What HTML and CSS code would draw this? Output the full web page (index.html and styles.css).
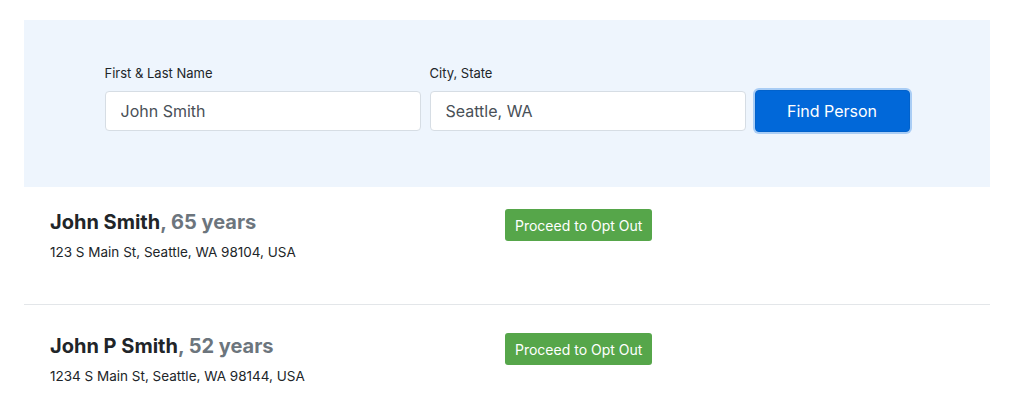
FILE: index.html
```html
<!DOCTYPE html>
<html lang="en">
<head>
  <meta charset="UTF-8">
  <meta name="viewport" content="width=device-width, initial-scale=1">
  <title>Find Person</title>
  <link rel="stylesheet" href="styles.css">
</head>
<body>
  <div class="page">
    <form class="search" onsubmit="return false">
      <div class="field">
        <label for="name">First &amp; Last Name</label>
        <input type="text" id="name" value="John Smith">
      </div>
      <div class="field">
        <label for="city">City, State</label>
        <input type="text" id="city" value="Seattle, WA">
      </div>
      <button class="btn-find" type="submit">Find Person</button>
    </form>

    <div class="results">
      <div class="person">
        <div class="info">
          <h2>John Smith<span class="age">, 65 years</span></h2>
          <p>123 S Main St, Seattle, WA 98104, USA</p>
        </div>
        <div class="action">
          <button class="btn-optout">Proceed to Opt Out</button>
        </div>
      </div>
      <div class="person">
        <div class="info">
          <h2>John P Smith<span class="age">, 52 years</span></h2>
          <p>1234 S Main St, Seattle, WA 98144, USA</p>
        </div>
        <div class="action">
          <button class="btn-optout">Proceed to Opt Out</button>
        </div>
      </div>
    </div>
  </div>
</body>
</html>
```

FILE: styles.css
```css
body {
  font-family: Inter, 'Liberation Sans', sans-serif;
  background-color: #fff;
  color: #212529;
  margin: 0;
  padding: 20px 34px 0 24px;
}
.search {
  display: flex;
  justify-content: center;
  align-items: flex-end;
  gap: 9px;
  background-color: #eef5fd;
  padding: 45px 0 56px;
}
.field {
  display: flex;
  flex-direction: column;
  width: 316px;
}
.field label {
  font-size: 13px;
  color: #212529;
  margin-bottom: 10px;
}
.field input {
  box-sizing: border-box;
  height: 40px;
  padding: 0 15px;
  font-family: inherit;
  font-size: 16px;
  color: #495057;
  background: #fff;
  border: 1px solid #d6dde4;
  border-radius: 4px;
}
.btn-find {
  width: 155px;
  height: 42px;
  margin-bottom: -1px;
  font-family: inherit;
  font-size: 16px;
  color: #fff;
  background-color: #0168d9;
  border: 1px solid #0162cc;
  border-radius: 4px;
  box-shadow: 0 0 0 2px #a9cdf5;
  cursor: pointer;
}
.person {
  display: flex;
  padding: 21px 26px 0;
  height: 96px;
  border-bottom: 1px solid #e3e6e9;
}
.person + .person {
  padding-top: 27px;
}
.info {
  width: 455px;
}
.info h2 {
  margin: 0;
  font-size: 20px;
  font-weight: 700;
  line-height: 28px;
}
.age {
  color: #6c757d;
}
.info p {
  margin: 8px 0 0;
  font-size: 13.5px;
  color: #212529;
}
.action {
  padding-top: 1px;
}
.btn-optout {
  height: 32px;
  padding: 0 10px;
  font-family: inherit;
  font-size: 14px;
  color: #fff;
  background-color: #56a64a;
  border: none;
  border-radius: 3px;
  cursor: pointer;
}
.results .person:last-child {
  border-bottom: none;
}
```
